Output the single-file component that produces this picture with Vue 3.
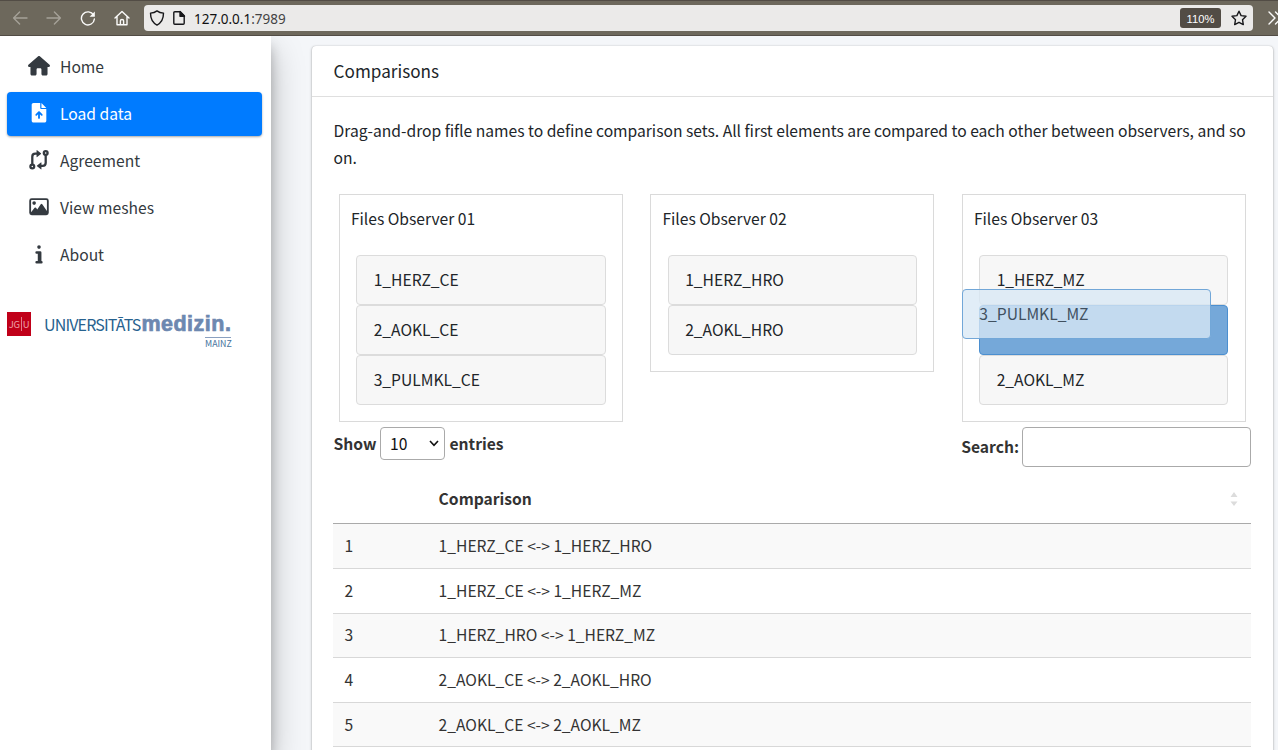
<script setup>
const observers = [
  { title: 'Files Observer 01', files: [{ n: '1_HERZ_CE' }, { n: '2_AOKL_CE' }, { n: '3_PULMKL_CE' }] },
  { title: 'Files Observer 02', files: [{ n: '1_HERZ_HRO' }, { n: '2_AOKL_HRO' }] },
  { title: 'Files Observer 03', files: [{ n: '1_HERZ_MZ' }, { n: '', drag: '3_PULMKL_MZ' }, { n: '2_AOKL_MZ' }] },
]
const rows = [
  '1_HERZ_CE <-> 1_HERZ_HRO',
  '1_HERZ_CE <-> 1_HERZ_MZ',
  '1_HERZ_HRO <-> 1_HERZ_MZ',
  '2_AOKL_CE <-> 2_AOKL_HRO',
  '2_AOKL_CE <-> 2_AOKL_MZ',
]
</script>

<template>
  <div class="page">
    <header class="toolbar">
      <svg class="tb dim" viewBox="0 0 16 16"><path d="M15 8H1.600M7.600 2L1.600 8l6 6" /></svg>
      <svg class="tb dim fwd" viewBox="0 0 16 16"><path d="M1 8h13.400M8.400 2l6 6-6 6" /></svg>
      <svg class="tb reload" viewBox="0 0 16 16"><path d="M13.600 5.200A6.500 6.500 0 1 0 14.400 9" /><path d="M14.800 1.500v5.200H9.600z" fill="#fbfbfa" stroke="none" /></svg>
      <svg class="tb home" viewBox="0 0 16 16"><path d="M1 8l7-6.600L15 8M3 6.500v8.300h10V6.500M6.400 14.800v-4.100q0-1.200 1.600-1.200t1.600 1.200v4.100" /></svg>
      <div class="urlbar">
        <svg class="ub" viewBox="0 0 16 16"><path d="M8 .9C6.200 2.300 4 3 1.500 3.100c0 5.500 1.500 9.500 6.500 12 5-2.500 6.500-6.500 6.500-12C12 3 9.800 2.300 8 .9z" /></svg>
        <svg class="ub doc" viewBox="0 0 16 16"><path d="M3.800 1.700h5.400l4 4v7.600q0 1-1 1H3.800q-1 0-1-1V2.700q0-1 1-1z" /><path d="M9 1.500v4.700h4.500z" fill="#17171a" /></svg>
        <span class="url"><b>127.0.0.1</b>:7989</span>
        <span class="zoom">110%</span>
        <svg class="ub star" viewBox="0 0 16 16"><path d="M8 1.200l2.100 4.400 4.900.7-3.500 3.400.8 4.900L8 12.300l-4.300 2.300.8-4.900L1 6.300l4.900-.7z" /></svg>
      </div>
      <svg class="more" viewBox="0 0 16 16"><path d="M2 2l6 6-6 6M8.500 2l6 6-6 6" /></svg>
    </header>

    <div class="body">
      <aside class="sidebar">
        <nav>
          <a>
            <svg viewBox="0 0 576 512"><path d="M575.800 255.500c0 18-15 32.100-32 32.100h-32l.7 184.400c0 22-18 40-40 40H392c-22 0-40-18-40-40V352c0-17.700-14.300-32-32-32h-64c-17.700 0-32 14.300-32 32v120c0 22-18 40-40 40h-80c-22 0-40-18-40-40V287.600H32c-18 0-32-14-32-32.100 0-9 3-17 10-24L266.400 8c7-7 15-8 22-8s15 2 21 7l255.400 224.500c8 7 12 15 11 24z" /></svg>
            <span>Home</span>
          </a>
          <a class="active">
            <svg viewBox="-96 0 576 512"><path fill-rule="evenodd" d="M256 0v128h128zM224 128V0H48C21.500 0 0 21.500 0 48v416c0 26.500 21.500 48 48 48h288c26.500 0 48-21.500 48-48V160H256c-17.700 0-32-14.300-32-32zM209 223l72 72c10 10 9 24 0 34s-25 9-34 0l-31-31v94c0 13-11 24-24 24s-24-11-24-24v-94l-31 31c-9 9-25 9-34 0s-9-24 0-34l72-72c9-9 25-9 34 0z" /></svg>
            <span>Load data</span>
          </a>
          <a>
            <svg viewBox="-32 0 576 512"><g class="line"><circle cx="432" cy="80" r="50" /><circle cx="80" cy="432" r="50" /><path d="M432 128v208q0 80-80 80h-48M80 384V176q0-80 80-80h48" /></g><path d="M192 12q0-18 15-8l100 80q10 10 0 20l-100 80q-15 10-15-8zM320 336q0-18-15-8l-100 80q-10 10 0 20l100 80q15 10 15-8z" /></svg>
            <span>Agreement</span>
          </a>
          <a>
            <svg viewBox="-32 0 576 512"><path fill-rule="evenodd" d="M64 32h384q64 0 64 64v320q0 64-64 64H64q-64 0-64-64V96q0-64 64-64zM64 80q-16 0-16 16v305l92-117q20-20 38 0l32 41 92-135q20-20 40 0l122 180V96q0-16-16-16z" /><circle cx="128" cy="160" r="48" /></svg>
            <span>View meshes</span>
          </a>
          <a>
            <svg viewBox="-192 0 576 512"><circle cx="96" cy="80" r="48" /><path d="M32 192h96q32 0 32 32v224q32 0 32 32t-32 32H32q-32 0-32-32t32-32h32V256H32q-32 0-32-32t32-32z" /></svg>
            <span>About</span>
          </a>
        </nav>
        <div class="logo">
          <div class="jgu">JG<i></i>U</div>
          <div class="brand">
            <div class="name"><span class="thin">UNIVERSITĀTS</span><span class="thick">medizin.</span></div>
            <div class="city">MAINZ</div>
          </div>
        </div>
      </aside>

      <main class="card">
        <h3>Comparisons</h3>
        <div class="content">
          <p>Drag-and-drop fifle names to define comparison sets. All first elements are compared to each other between observers, and so on.</p>
          <div class="buckets">
            <section v-for="o in observers" :key="o.title" class="bucket">
              <div class="title">{{ o.title }}</div>
              <div v-for="(f, i) in o.files" :key="i" class="file" :class="{ ghost: f.drag }">
                {{ f.n }}
                <div v-if="f.drag" class="dragged">{{ f.drag }}</div>
              </div>
            </section>
          </div>
          <div class="controls">
            <label class="length">Show
              <span class="select">10<svg viewBox="0 0 10 7"><path d="M1 1l4 4.300L9 1" /></svg></span>
              entries</label>
            <label class="search">Search:<input type="text" /></label>
          </div>
          <table>
            <thead>
              <tr><th class="num"></th><th><div class="sort">Comparison<svg viewBox="0 0 8 16"><path d="M4 1l3.500 5H.5zM4 15l3.500-4.500H.5z" /></svg></div></th></tr>
            </thead>
            <tbody>
              <tr v-for="(r, i) in rows" :key="i"><td>{{ i + 1 }}</td><td>{{ r }}</td></tr>
            </tbody>
          </table>
        </div>
      </main>
    </div>
  </div>
</template>

<style>
body { margin: 0; overflow: hidden; }
</style>

<style scoped>
* { box-sizing: border-box; }
.page {
  width: 1278px; height: 750px; overflow: hidden; display: flex; flex-direction: column;
  font-family: "Source Sans Pro", "Noto Sans CJK SC", sans-serif; font-size: 15.640px; color: #212529;
}
.toolbar {
  height: 36px; flex: none; background: #6d685c; border-top: 1px solid #524c45; border-bottom: 1px solid #524c45;
  display: flex; align-items: center; position: relative; z-index: 2; padding-left: 12px;
}
svg { flex: none; }
.tb, .ub, .more { width: 16px; height: 16px; fill: none; stroke: #fbfbfa; stroke-width: 1.4; stroke-linecap: round; stroke-linejoin: round; }
.dim { stroke: #a5a198; }
.fwd { margin-left: 18px; }
.reload { margin-left: 18px; }
.home { margin-left: 17.500px; }
.urlbar { width: 1109px; height: 26px; margin-left: 14.500px; background: #ebeae9; border-radius: 4px; display: flex; align-items: center; padding: 0 6px 0 5px; }
.ub { stroke: #17171a; }
.doc { margin-left: 6px; }
.url { font: 13.5px/20px "Noto Sans", sans-serif; color: #444; margin-left: 7px; flex: 1; position: relative; top: 1px; }
.url b { font-weight: 400; color: #111; }
.zoom { width: 41px; height: 20px; border-radius: 3px; background: #524c45; color: #fff; text-align: center; font: 11.200px/22px "Liberation Sans", sans-serif; margin-right: 10px; }
.more { margin-left: 14px; margin-right: -8px; }
.body { flex: 1; min-height: 0; display: flex; align-items: flex-start; background: #f4f6f9; }
.sidebar { width: 271px; height: 714px; flex: none; background: #fff; box-shadow: 0 15px 31px rgba(0,0,0,.25), 0 11px 11px rgba(0,0,0,.22); padding: 9px 9px 0 7px; }
nav { display: flex; flex-direction: column; gap: 3px; }
nav a { height: 44px; border-radius: 4px; display: flex; align-items: center; color: #343a40; padding-left: 21px; }
nav a svg { width: 22px; height: 19.5px; fill: currentColor; margin-top: -2px; }
nav a span { margin-left: 10px; line-height: 26px; }
nav a.active { background: #007bff; color: #fff; box-shadow: 0 1px 3px rgba(0,0,0,.12), 0 1px 2px rgba(0,0,0,.24); }
.line { fill: none; stroke: currentColor; stroke-width: 60; }
.logo { margin-top: 32px; display: flex; align-items: flex-start; }
.jgu { margin-top: 3px; width: 24px; height: 24px; background: #c00019; color: #eda0a8; display: flex; align-items: center; justify-content: center; font: 9.500px/24px "Noto Sans CJK SC", sans-serif; letter-spacing: -.3px; }
.jgu i { width: 1px; height: 14px; background: #e0808a; margin: 0 1px; }
.brand { margin-left: 13px; width: 188px; }
.name { display: flex; align-items: baseline; line-height: 27px; height: 28px; padding-top: 2px; white-space: nowrap; }
.thin { font-size: 16px; color: #27628f; letter-spacing: -.85px; }
.thick { font-family: "Liberation Sans", sans-serif; font-size: 21.500px; font-weight: 700; color: #6d88b0; -webkit-text-stroke: .7px #6d88b0; letter-spacing: .5px; margin-left: 1px; }
.city { margin-left: auto; margin-right: 1px; width: 26px; border-top: 1px solid #8aa0c0; color: #44729c; font-size: 8.800px; line-height: 11px; }
.card { margin-left: 41px; margin-top: 9.500px; width: 961px; height: 760px; flex: none; background: #fff; border-radius: 4px; box-shadow: 0 0 1px rgba(0,0,0,.25), 0 1px 3px rgba(0,0,0,.3); }
h3 { margin: 0; height: 51.500px; border-bottom: 1px solid #dfdfdf; padding: 11.500px 21.600px 0; font-size: 17.150px; line-height: 28px; font-weight: 400; }
.content { padding: 20px 22px 0 21.600px; }
p { margin: 0; line-height: 27px; width: 920px; }
.buckets { margin: 23px 0 0 5.400px; display: flex; align-items: flex-start; gap: 27.500px; height: 233px; }
.bucket { width: 284px; flex: none; border: 1px solid #dadada; padding: 11px 16.300px 16px 16.200px; }
.bucket:first-child { padding-right: 15.800px; }
.bucket:last-child { padding-right: 16.800px; }
.title { margin-left: -5.300px; height: 49px; line-height: 26px; }
.file { height: 50px; border: 1px solid #dcdcdc; border-radius: 4px; background: #f7f7f7; padding-left: 16.500px; line-height: 48px; position: relative; }
.ghost { background: #75a8d9; border-color: #4b8fd0; }
.dragged { position: absolute; left: -18px; top: -17px; width: 249px; height: 50px; border: 1px solid #72a7d8; border-radius: 4px; background: rgba(217,232,245,.78); color: #40505f; padding-left: 16.200px; line-height: 48px; }
.controls { display: flex; justify-content: space-between; align-items: flex-start; font-weight: 700; color: #333; }
.length { display: flex; align-items: center; gap: 4px; height: 33px; }
.select { width: 65px; height: 33px; border: 1px solid #aaa; border-radius: 4px; display: flex; align-items: center; justify-content: space-between; padding: 0 5px 0 8.500px; font-weight: 400; color: #111; }
.select svg { width: 10px; height: 7px; fill: none; stroke: #111; stroke-width: 1.600; }
.search { display: flex; align-items: center; gap: 3px; height: 40px; line-height: 22px; }
input { width: 229px; height: 40px; border: 1px solid #aaa; border-radius: 4px; background: #fff; }
table { margin-top: 8.400px; width: 918px; margin-left: -.6px; border-collapse: separate; border-spacing: 0; color: #333; table-layout: fixed; }
th { height: 49px; padding: 0 11px 0 11.600px; text-align: left; border-bottom: 1px solid #aaa; font-weight: 700; }
.num { width: 94px; }
.sort { display: flex; justify-content: space-between; align-items: center; line-height: 24px; }
.sort svg { width: 8px; height: 16px; margin-right: 2px; fill: #dcdcdc; }
td { height: 44.600px; padding: 0 11px 0 11.600px; border-bottom: 1px solid #d8d8d8; line-height: 24px; }
tbody tr:nth-child(odd) { background: #f9f9f9; }
</style>
